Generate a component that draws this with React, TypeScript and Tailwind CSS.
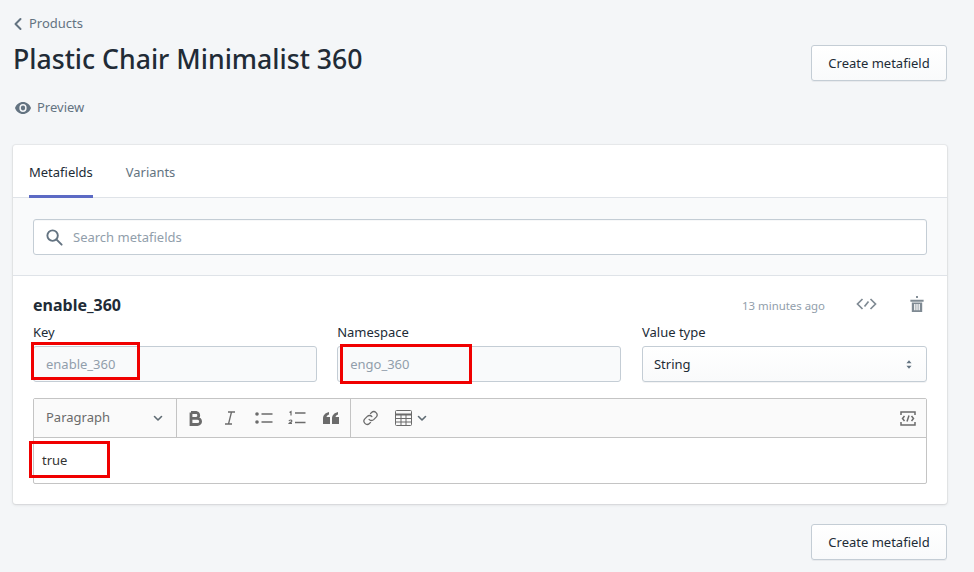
import React from "react";

const Caret = () => (
  <svg width="12" height="12" viewBox="0 0 12 12" fill="none" stroke="#5f6b73" strokeWidth="1.6" strokeLinecap="round" strokeLinejoin="round">
    <path d="M2.500 4.500 6 8l3.500-3.500" />
  </svg>
);

const Btn = () => (
  <button className="h-9 w-[136px] rounded-[3px] border border-[#c4cdd5] bg-gradient-to-b from-white to-[#f9fafb] pt-[2px] text-[13px] text-[#212b36] shadow-[0_1px_0_rgba(22,29,37,0.05)]">
    Create metafield
  </button>
);

const Mark = ({ className }: { className: string }) => (
  <div className={"pointer-events-none absolute border-[3px] border-[#f00000] " + className} />
);

export default function App() {
  return (
    <div className="relative h-[572px] w-[974px] overflow-hidden bg-[#f4f6f8] pl-[13px] pr-[27px] text-[#212b36] [font-family:'Noto_Sans','Open_Sans',sans-serif]">
      <div className="flex h-[145px] items-start justify-between">
        <div className="flex flex-col">
          <div className="mt-[15px] flex h-[18px] items-center gap-[6px] text-[13px] text-[#637381]">
            <svg width="10" height="14" viewBox="0 0 10 14" fill="none" stroke="#637381" strokeWidth="2" strokeLinecap="round" strokeLinejoin="round">
              <path d="M7.500 2 2.500 7l5 5" />
            </svg>
            Products
          </div>
          <h1 className="mt-[7px] text-[26.65px] font-medium leading-[38px] text-[#212b36]">Plastic Chair Minimalist 360</h1>
          <div className="mt-[21px] flex h-[18px] items-center gap-[6px] pl-[2px] text-[13px] text-[#637381]">
            <svg width="16" height="12" viewBox="1 4.500 22 15" preserveAspectRatio="none" fill="#637381">
              <path d="M12 4.500C7 4.500 2.700 7.600 1 12c1.700 4.400 6 7.500 11 7.500s9.300-3.100 11-7.500c-1.700-4.400-6-7.500-11-7.500Zm0 12.500a5 5 0 1 1 0-10 5 5 0 0 1 0 10Zm0-8a3 3 0 1 0 0 6 3 3 0 0 0 0-6Z" />
            </svg>
            Preview
          </div>
        </div>
        <div className="mt-[45px]">
          <Btn />
        </div>
      </div>

      <div className="h-[359px] rounded-[3px] bg-white shadow-[0_0_0_1px_rgba(63,63,68,0.05),0_1px_3px_0_rgba(63,63,68,0.15)]">
        <div className="flex h-[53px] border-b border-[#dfe3e8] pl-[16px] text-[13px]">
          <div className="flex h-[53px] items-center border-b-[3px] border-[#5c6ac4] pt-[5px] text-[#212b36]">Metafields</div>
          <div className="ml-[33px] flex h-[53px] items-center pt-[2px] text-[12.9px] text-[#637381]">Variants</div>
        </div>

        <div className="border-b border-[#dfe3e8] bg-[#f9fafb] px-[20px] pb-[20px] pt-[21px]">
          <div className="flex h-9 items-center gap-[9px] rounded-[3px] border border-[#c4cdd5] bg-white pl-[11px] text-[13px] text-[#919eab] shadow-[inset_0_1px_0_rgba(99,115,129,0.05)]">
            <svg width="19" height="19" viewBox="0 0 20 20" fill="none" stroke="#637381" strokeWidth="2" strokeLinecap="round">
              <circle cx="8" cy="8" r="5.500" />
              <path d="m12.500 12.500 5 5" />
            </svg>
            <span className="pt-[2px]">Search metafields</span>
          </div>
        </div>

        <div className="px-[20px]">
          <div className="flex h-[40px] items-end justify-between">
            <div className="text-[16px] font-bold leading-[22px] text-[#212b36]">enable_360</div>
            <div className="flex items-center pb-[2px] text-[11.4px] text-[#919eab]">
              13 minutes ago
              <svg className="ml-[31px] -translate-y-px" width="21" height="14" viewBox="0 0 21 14" fill="none" stroke="#7f8a93" strokeWidth="1.700">
                <path d="M6.500 2 1.500 7l5 5M14.500 2l5 5-5 5M8.500 9.500l4-5" />
              </svg>
              <svg className="ml-[33px] mr-[3px] -translate-y-px" width="14" height="17" viewBox="0 0 14 18" fill="#7f8a93">
                <path d="M6 0h2v2H6zM0 4h14v2H0zM1.500 7h11v10h-11zM4 8.500V15h1.400V8.500zm2.300 0V15h1.400V8.500zm2.300 0V15H10V8.500z" fillRule="evenodd" />
              </svg>
            </div>
          </div>

          <div className="mt-[6px] grid grid-cols-[283.7px_284.3px_285px] justify-between">
            {[
              ["Key", "enable_360"],
              ["Namespace", "engo_360"],
            ].map(([l, v]) => (
              <div key={l}>
                <div className="h-[24px] pt-[1px] text-[13px] leading-[18px] text-[#212b36]">{l}</div>
                <div className="flex h-9 items-center rounded-[3px] border border-[#c4cdd5] bg-[#f9fafb] pl-[12px] pt-[2px] text-[13px] text-[#919eab]">{v}</div>
              </div>
            ))}
            <div>
              <div className="h-[24px] pt-[1px] text-[13px] leading-[18px] text-[#212b36]">Value type</div>
              <div className="flex h-9 items-center justify-between rounded-[3px] border border-[#c4cdd5] bg-gradient-to-b from-white to-[#f9fafb] pl-[11px] pr-[14px] text-[13px] text-[#212b36] shadow-[0_1px_0_rgba(22,29,37,0.05)]">
                <span className="pt-[2px]">String</span>
                <svg width="6" height="11" viewBox="0 0 7 12" fill="#637381">
                  <path d="M3.500 1 6.500 4.500H.5zM3.500 11 .5 7.500h6z" />
                </svg>
              </div>
            </div>
          </div>

          <div className="mt-[16px] h-[86px] rounded-[2px] border border-[#c4c4c4]">
            <div className="flex h-[39px] items-center border-b border-[#c4c4c4] bg-[#fafafa]">
              <div className="flex h-full w-[143px] items-center justify-between border-r border-[#c4c4c4] pl-[12px] pr-[12px] text-[13px] text-[#6b6b6b]">
                Paragraph
                <Caret />
              </div>
              <div className="flex h-full w-[174px] items-center border-r border-[#c4c4c4] text-[#6b6b6b]">
                <svg className="ml-[12px]" width="14" height="15" viewBox="0 0 14 15" fill="none" stroke="#6b6b6b" strokeWidth="2.800">
                  <path d="M2 1.500h5.500a3 3 0 0 1 0 5.800H2m0 0h6.500a3 3 0 0 1 0 6.200H2V1.500Z" />
                </svg>
                <svg className="ml-[21px]" width="12" height="14" viewBox="0 0 12 14" fill="none" stroke="#6b6b6b" strokeWidth="1.300">
                  <path d="M4 1h7M1 13h7M7.500 1l-3 12" />
                </svg>
                <svg className="ml-[19px]" width="18" height="14" viewBox="0 0 18 14" fill="#6b6b6b">
                  <circle cx="2" cy="3" r="1.800" />
                  <circle cx="2" cy="11" r="1.800" />
                  <path d="M6.500 2.300h11v1.400h-11zM6.500 10.300h11v1.400h-11z" />
                </svg>
                <svg className="ml-[15px]" width="18" height="16" viewBox="0 0 18 16" fill="none" stroke="#6b6b6b" strokeWidth="1.200">
                  <path d="M1.500 2.500 3 1.600v4M1 11.200c.3-1.600 3-1.600 2.800 0 0 .9-2.600 1.600-2.800 2.200h3" />
                  <path d="M7 3h10.500M7 12.500h10.500" strokeWidth="1.400" />
                </svg>
                <svg className="ml-[17px]" width="16" height="12" viewBox="0 0 16 12" fill="#6b6b6b">
                  <path d="M0 7C0 3 2.200 1 6 0v2.400C4.600 3 3.800 3.800 3.500 5H7v7H0zM9 7c0-4 2.200-6 6-7v2.400C13.600 3 12.800 3.800 12.500 5H16v7H9z" />
                </svg>
              </div>
              <svg className="ml-[11px]" width="17" height="18" viewBox="0 0 24 24" fill="none" stroke="#6b6b6b" strokeWidth="1.800" strokeLinecap="round">
                <path d="M10 14a4.500 4.500 0 0 0 6.500.3l3.500-3.500a4.600 4.600 0 0 0-6.500-6.500L12 5.800" />
                <path d="M14 10a4.500 4.500 0 0 0-6.500-.3L4 13.200a4.600 4.600 0 0 0 6.500 6.500l1.500-1.500" />
              </svg>
              <svg className="ml-[16px]" width="17" height="16" viewBox="0 0 17 16" fill="none" stroke="#6b6b6b">
                <rect x="0.500" y="0.500" width="16" height="15" rx="1" />
                <path d="M.5 4.500h16" strokeWidth="2" />
                <path d="M.5 8.500h16M.5 12h16M6 4.500v11M11 4.500v11" />
              </svg>
              <span className="ml-[4px]">
                <Caret />
              </span>
              <svg className="ml-auto mr-[10px]" width="16" height="15" viewBox="0 0 16 15" fill="none" stroke="#6b6b6b" strokeWidth="1.500">
                <path d="M1 4V1h14v3M1 11v3h14v-3" />
                <path d="M4.500 5 2.500 7.500l2 2.500M11.500 5l2 2.500-2 2.500M9 4.500 7 10.500" />
              </svg>
            </div>
            <div className="flex h-[45px] items-center pl-[8px] pt-[1px] text-[13px] text-[#333]">true</div>
          </div>
        </div>
      </div>

      <div className="mt-[20px] flex justify-end">
        <Btn />
      </div>

      <Mark className="left-[31px] top-[342px] h-[38px] w-[109px]" />
      <Mark className="left-[340px] top-[344px] h-[40px] w-[132px]" />
      <Mark className="left-[29px] top-[441px] h-[37px] w-[81px]" />
    </div>
  );
}
